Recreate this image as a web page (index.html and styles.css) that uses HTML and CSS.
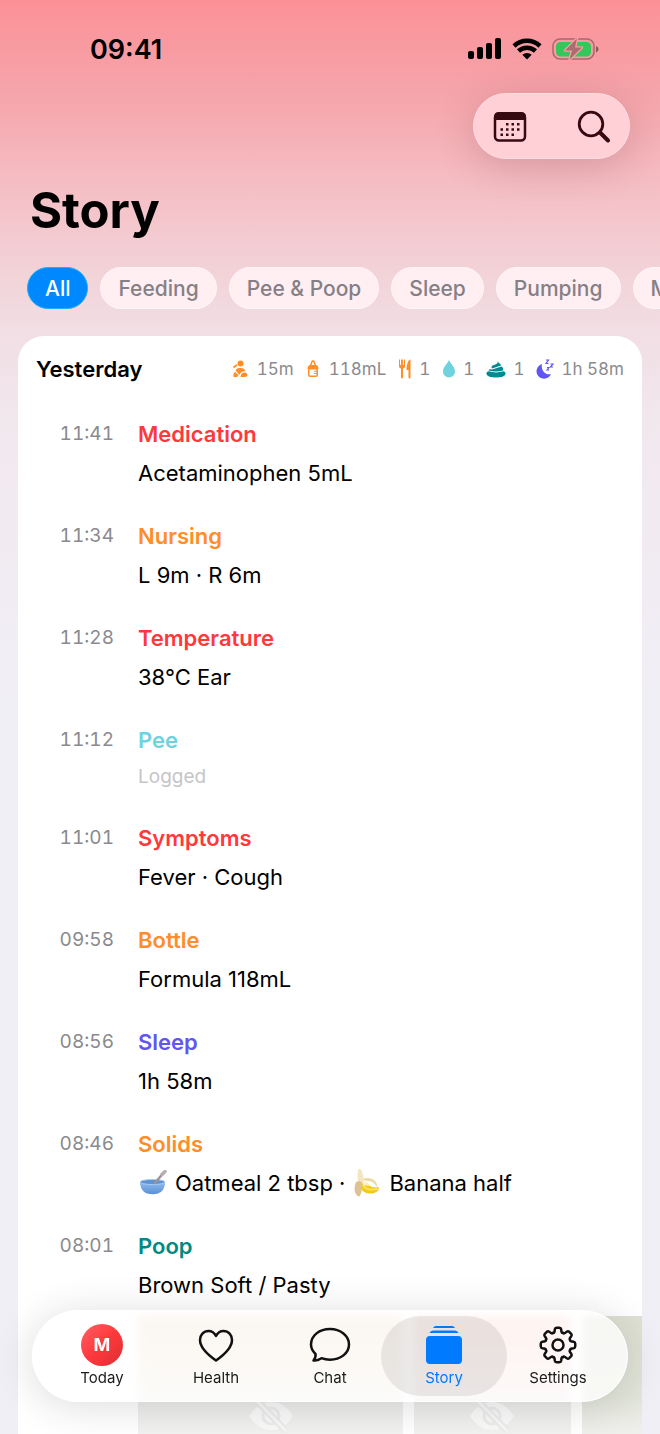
FILE: index.html
```html
<!DOCTYPE html>
<html lang="en">
<head>
    <meta charset="UTF-8">
    <meta name="viewport" content="width=device-width, initial-scale=1.0">
    <title>Story</title>
    <link rel="stylesheet" href="styles.css">
</head>
<body>
    <div class="status-bar">
        <time class="clock">09:41</time>
        <div class="status-icons">
            <svg width="34" height="22" viewBox="0 0 34 22">
                <rect x="0" y="13" width="6" height="8" rx="2"/>
                <rect x="9" y="9" width="6" height="12" rx="2"/>
                <rect x="18" y="5" width="6" height="16" rx="2"/>
                <rect x="27" y="0" width="6" height="21" rx="2"/>
            </svg>
            <svg width="30" height="22" viewBox="0 0 30 22">
                <g fill="none" stroke="#000" stroke-width="4.500">
                    <path d="M2 8a19 19 0 0 1 26 0"/>
                    <path d="M6.500 13a12.500 12.500 0 0 1 17 0"/>
                </g>
                <path d="M10.300 16.700a7 7 0 0 1 9.400 0L15 21.500z"/>
            </svg>
            <svg width="47" height="22" viewBox="0 0 47 22">
                <rect x="1" y="1" width="41" height="20" rx="7" fill="none" stroke="#a9686c" stroke-width="1.500"/>
                <path d="M44 8v6.500q2.500-.8 2.500-3.200T44 8z" fill="#8d585c"/>
                <rect x="4" y="4" width="35" height="14.500" rx="4.500" fill="#34c759"/>
                <path d="M25 .5 13 12.500h7L17.500 21.500 30 9.500h-7z" fill="#ac6c70" stroke="#f79da3" stroke-width="2.500" paint-order="stroke" stroke-linejoin="round"/>
            </svg>
        </div>
    </div>

    <header class="top">
        <div class="toolbar">
            <button aria-label="Calendar">
                <svg width="34" height="32" viewBox="0 0 34 32">
                    <rect x="2" y="2.500" width="30" height="27" rx="4" fill="none" stroke="#360810" stroke-width="2.500"/>
                    <path d="M1 9V6q0-5 5-5h22q5 0 5 5v3z" fill="#360810"/>
                    <g fill="#360810">
                        <path d="M13 12h2.500v2.500H13zM18.500 12H21v2.500h-2.500zM24 12h2.500v2.500H24z"/>
                        <path d="M7.500 17.200H10v2.500H7.500zM13 17.200h2.500v2.500H13zM18.500 17.200H21v2.500h-2.500zM24 17.200h2.500v2.500H24z"/>
                        <path d="M7.500 22.500H10V25H7.500zM13 22.500h2.500V25H13zM18.500 22.500H21V25h-2.500z"/>
                    </g>
                </svg>
            </button>
            <button aria-label="Search">
                <svg width="34" height="34" viewBox="0 0 34 34" fill="none" stroke="#360810" stroke-linecap="round">
                    <circle cx="14" cy="14" r="11.800" stroke-width="2.800"/>
                    <path d="M23 22.500 31 30.500" stroke-width="4"/>
                </svg>
            </button>
        </div>
        <h1>Story</h1>
    </header>

    <nav class="filters">
        <button class="chip selected">All</button>
        <button class="chip">Feeding</button>
        <button class="chip">Pee &amp; Poop</button>
        <button class="chip">Sleep</button>
        <button class="chip">Pumping</button>
        <button class="chip">Medication</button>
    </nav>

    <main class="day">
        <div class="day-header">
            <h2>Yesterday</h2>
            <ul class="totals">
                <li>
                    <svg class="wide" width="16" height="18" viewBox="0 0 16 18" fill="#ff8d28">
                        <circle cx="8.500" cy="3.500" r="3"/>
                        <path d="M2 7 4.500 5.200" stroke="#ff8d28" stroke-width="1.800" stroke-linecap="round"/>
                        <path d="M3.500 10.500C4.500 8.500 6 8 8.500 8c3 0 4.800 1.500 4.500 3.200-2.500-.2-5 1.500-5.500 3.800L3.500 10.500z"/>
                        <path d="M1.500 17q-.5-4 1.500-5l3.500 3q0 2-2 2z"/>
                        <path d="M8.500 17c0-2.500 1.800-4.700 4.500-4.500 2.300.3 2.800 2.500 1.800 3.800-.8.900-2.300.7-3.300.7z"/>
                    </svg>
                    15m
                </li>
                <li>
                    <svg class="wide" width="14" height="18" viewBox="0 0 14 18">
                        <path d="M4.500 5.500 6.300 1h1.400L9.500 5.500" fill="none" stroke="#ff8d28" stroke-width="1.500"/>
                        <path d="M1.500 9q0-4 3-4h5q3 0 3 4z" fill="#ff8d28"/>
                        <rect x="2.700" y="8.700" width="8.600" height="7.600" rx="1.500" fill="none" stroke="#ff8d28" stroke-width="1.500"/>
                        <path d="M8 11.200h3M8 13.500h3" stroke="#ff8d28"/>
                    </svg>
                    118mL
                </li>
                <li>
                    <svg width="14" height="20" viewBox="0 0 14 20" fill="#ff8d28">
                        <path d="M1 .5v7Q1 9 3 9.500V18q0 1.500 1 1.500T5 18V9.500Q7 9 7 7.500v-7"/>
                        <path d="M2.500 0v6M5.400 0v6" stroke="#fff"/>
                        <path d="M12.500.5C10 1 8.500 5.500 8.500 11h2v7.500q0 1 1 1t1-1z"/>
                    </svg>
                    1
                </li>
                <li>
                    <svg width="14" height="18" viewBox="0 0 14 18" fill="#6fd3df">
                        <path d="M7 0c-1.500 3.500-6 7-6 11.500a6 6 0 0 0 12 0C13 7 8.500 3.500 7 0z"/>
                    </svg>
                    1
                </li>
                <li>
                    <svg width="20" height="18" viewBox="0 0 20 18" fill="#008a91">
                        <path d="M12 1c.5 3 3 2.300 3 4.500L6 8.500C5 7 5.500 5.500 8 5c2-.3 4-1.500 4-4z"/>
                        <path d="M2.500 10.500Q3 8.500 6 9.500L15.500 6.500Q18 8 17 10.500q-7 2-14.500 0z"/>
                        <path d="M2.500 11.300q7.500 2.200 15 0Q20 12 19.500 14.200 18 17.500 10 17.500T.5 14.200Q0 12 2.500 11.300z"/>
                    </svg>
                    1
                </li>
                <li>
                    <svg width="18" height="20" viewBox="0 0 18 20" fill="#6155f5">
                        <path d="M6 5A7.500 7.500 0 1 0 15 15C9.500 16.500 4.500 11 6 5z"/>
                        <path d="M10 1h2.500L10 4.500h2.500M14.500 5H17l-2.500 3H17M11 8.500h2l-2 2.500h2" fill="none" stroke="#6155f5" stroke-width="1.200"/>
                    </svg>
                    1h 58m
                </li>
            </ul>
        </div>

        <ol class="entries">
            <li class="entry">
                <time>11:41</time>
                <div>
                    <h3 class="health">Medication</h3>
                    <p>Acetaminophen 5mL</p>
                </div>
            </li>
            <li class="entry">
                <time>11:34</time>
                <div>
                    <h3 class="feeding">Nursing</h3>
                    <p>L 9m · R 6m</p>
                </div>
            </li>
            <li class="entry">
                <time>11:28</time>
                <div>
                    <h3 class="health">Temperature</h3>
                    <p>38°C Ear</p>
                </div>
            </li>
            <li class="entry">
                <time>11:12</time>
                <div>
                    <h3 class="pee">Pee</h3>
                    <p class="logged">Logged</p>
                </div>
            </li>
            <li class="entry">
                <time>11:01</time>
                <div>
                    <h3 class="health">Symptoms</h3>
                    <p>Fever · Cough</p>
                </div>
            </li>
            <li class="entry">
                <time>09:58</time>
                <div>
                    <h3 class="feeding">Bottle</h3>
                    <p>Formula 118mL</p>
                </div>
            </li>
            <li class="entry">
                <time>08:56</time>
                <div>
                    <h3 class="sleep">Sleep</h3>
                    <p>1h 58m</p>
                </div>
            </li>
            <li class="entry">
                <time>08:46</time>
                <div>
                    <h3 class="feeding">Solids</h3>
                    <p class="foods">
                        <svg width="30" height="28" viewBox="0 0 30 28">
                            <defs>
                                <linearGradient id="bowl" x1="0" y1="0" x2="0" y2="1">
                                    <stop offset="0" stop-color="#8fbcf0"/>
                                    <stop offset="1" stop-color="#5a90d6"/>
                                </linearGradient>
                            </defs>
                            <path d="M2 13c0 7 4 10.500 7 11.500q6 1.500 11 0c4-1.500 7-5 7-11.500z" fill="url(#bowl)"/>
                            <ellipse cx="14.500" cy="13" rx="12.500" ry="2.500" fill="#5f92d0" stroke="#a9cdf5"/>
                            <path d="M17 14 24.500 5" stroke="#9c9397" stroke-width="2.500" stroke-linecap="round"/>
                            <path d="M24 5.500 27 2.500" stroke="#b7adb0" stroke-width="3.500" stroke-linecap="round"/>
                        </svg>
                        <span>Oatmeal 2 tbsp ·</span>
                        <svg width="30" height="28" viewBox="0 0 30 28">
                            <path d="M9 11C15 7 25 9 25.500 18c-2.500-2-4-6-9.500-6z" fill="#ecd9a8"/>
                            <path d="M8 14c4-2 7-1 9 2 2 2.500 6 2.500 9.500 2 1.500 3.500-3 7-9 6.500C11 24 7.500 20 8 14z" fill="#f4c81f"/>
                            <path d="M11 16c3 5 9 5.500 14.500 3.500" fill="none" stroke="#ffe45c" stroke-width="2"/>
                            <path d="M6 2Q6-.5 8 0t2 3q2 4 1.500 10L6 14Q5 8 6 2z" fill="#f4e5c3"/>
                            <path d="M4 13q5-2 6.500 1c-1 4 0 9-3 13.500C3 27 1 20 4 13z" fill="#dcc391"/>
                            <path d="M10 12.500c4 0 6 1.500 7.500 4.500L11 16z" fill="#fff1c7"/>
                        </svg>
                        <span>Banana half</span>
                    </p>
                </div>
            </li>
            <li class="entry">
                <time>08:01</time>
                <div>
                    <h3 class="poop">Poop</h3>
                    <p>Brown Soft / Pasty</p>
                    <div class="photos">
                        <div class="photo beige">
                            <svg width="46" height="34" viewBox="0 0 46 34">
                                <path d="M1 17Q10 3 23 3t22 14Q36 31 23 31T1 17z" fill="#fafafa"/>
                                <circle cx="23" cy="17" r="8" fill="none" stroke="#ededec" stroke-width="3"/>
                                <path d="M9 2 38 32" stroke="#ededec" stroke-width="7"/>
                                <path d="M9 2 38 32" stroke="#fafafa" stroke-width="2.500"/>
                            </svg>
                        </div>
                        <div class="photo pink">
                            <svg width="46" height="34" viewBox="0 0 46 34">
                                <path d="M1 17Q10 3 23 3t22 14Q36 31 23 31T1 17z" fill="#fafafa"/>
                                <circle cx="23" cy="17" r="8" fill="none" stroke="#ededec" stroke-width="3"/>
                                <path d="M9 2 38 32" stroke="#ededec" stroke-width="7"/>
                                <path d="M9 2 38 32" stroke="#fafafa" stroke-width="2.500"/>
                            </svg>
                        </div>
                        <div class="photo green"></div>
                    </div>
                </div>
            </li>
        </ol>
    </main>

    <nav class="tabs">
        <a href="#today">
            <span class="avatar">M</span>
            Today
        </a>
        <a href="#health">
            <svg width="42" height="42" viewBox="0 0 42 42" fill="none" stroke="#111" stroke-width="2.500">
                <path d="M21 36.500C11 29.500 5 23.500 5 16c0-5 3.500-9 8.500-9 3.500 0 6 2 7.500 5 1.500-3 4-5 7.500-5 5 0 8.500 4 8.500 9 0 7.500-6 13.500-16 20.500z" stroke-linejoin="round"/>
            </svg>
            Health
        </a>
        <a href="#chat">
            <svg width="42" height="42" viewBox="0 0 42 42" fill="none" stroke="#111" stroke-width="2.500">
                <path d="M21 5C10.500 5 2 11.500 2 20.500c0 4.500 2 7 4.500 9.500.5 2.500-.5 4.500-2 6.500 3 .3 5.500-.7 8-2.300 2.500 1 5.300 1.500 8.500 1.500 10.500 0 19-6.500 19-15.200S31.500 5 21 5z" stroke-linejoin="round"/>
            </svg>
            Chat
        </a>
        <a href="#story" class="active">
            <svg width="42" height="42" viewBox="0 0 42 42" fill="#007aff">
                <path d="M10 4q1-2 3-2h16q2 0 3 2zM6.500 9q1-2.500 3.500-2.500h22q2.500 0 3.500 2.500z"/>
                <rect x="3" y="12" width="36" height="28" rx="4"/>
            </svg>
            Story
        </a>
        <a href="#settings">
            <svg width="42" height="42" viewBox="0 0 42 42" fill="none" stroke="#111" stroke-width="2.500" stroke-linejoin="round">
                <path id="gear" d=""/>
                <circle cx="21" cy="21" r="5.500"/>
            </svg>
            Settings
        </a>
    </nav>

    <script>
        // outline of the settings gear: eight rounded teeth
        const teeth = 8;
        const step = Math.PI * 2 / teeth;
        const point = (radius, angle) =>
            (21 + radius * Math.sin(angle)).toFixed(2) + ' ' + (21 - radius * Math.cos(angle)).toFixed(2);
        let outline = '';
        for (let i = 0; i < teeth; i++) {
            const a = i * step;
            outline += (i ? 'L' : 'M') + point(16, a - 0.2);
            outline += 'Q' + point(17.3, a - 0.17) + ' ' + point(17.3, a - 0.08);
            outline += 'L' + point(17.3, a + 0.08);
            outline += 'Q' + point(17.3, a + 0.17) + ' ' + point(16, a + 0.2);
            outline += 'Q' + point(12, a + step / 2 - 0.1) + ' ' + point(13.2, a + step / 2);
            outline += 'Q' + point(12, a + step / 2 + 0.1) + ' ' + point(16, a + step - 0.2);
        }
        document.getElementById('gear').setAttribute('d', outline + 'Z');
    </script>
</body>
</html>
```
FILE: styles.css
```css
* {
    margin: 0;
    padding: 0;
    box-sizing: border-box;
}

body {
    height: 100vh;
    overflow: hidden;
    background: linear-gradient(#fb9197 0, #f5a6ac 100px, #f5bdc3 180px, #f2d0d5 260px, #f1dee4 330px, #f1e8ee 420px, #f1eff6 700px, #f0eff6 100%);
    font-family: Inter, "Liberation Sans", sans-serif;
    color: #000;
}

button {
    border: none;
    background: none;
    font: inherit;
    cursor: pointer;
}

ul, ol {
    list-style: none;
}

svg {
    display: block;
    flex: none;
}

.status-bar {
    display: flex;
    justify-content: space-between;
    align-items: center;
    height: 93px;
    padding: 5px 61px 0 90px;
}

.clock {
    font-size: 27px;
    font-weight: 600;
}

.status-icons {
    display: flex;
    align-items: center;
    gap: 10px;
}

.top {
    padding: 0 30px;
}

.toolbar {
    display: flex;
    justify-content: space-between;
    align-items: center;
    width: 157px;
    height: 66px;
    margin-left: auto;
    padding: 2px 18px 0 19px;
    border: 1px solid #ffdde1;
    border-radius: 33px;
    background: #ffd1d6;
    box-shadow: 0 8px 40px rgba(90, 30, 40, 0.2);
}

h1 {
    margin-top: 20px;
    font-size: 49px;
    font-weight: 700;
    line-height: 64px;
}

.filters {
    display: flex;
    gap: 12px;
    margin-top: 24px;
    padding-left: 27px;
    overflow: hidden;
}

.chip {
    flex: none;
    height: 42px;
    padding: 0 17px;
    border: 1px solid #fff5f7;
    border-radius: 21px;
    background: #ffeff3;
    color: #858085;
    font-size: 21px;
    font-weight: 500;
}

.chip.selected {
    border-color: #1eb0f5;
    background: #0088ff;
    color: #fff;
}

.day {
    margin: 27px 18px 0;
    overflow: hidden;
    border-radius: 26px;
    background: #fff;
}

.day-header {
    display: flex;
    justify-content: space-between;
    align-items: center;
    height: 66px;
    padding: 0 18px;
}

h2 {
    font-size: 22px;
    font-weight: 600;
}

.totals {
    display: flex;
    gap: 12px;
    color: #8a8a8e;
    font-size: 17px;
    font-variant-numeric: tabular-nums;
}

.totals li {
    display: flex;
    align-items: center;
    gap: 7px;
}

.totals .wide {
    margin-right: 2px;
}

.entries {
    display: flex;
    flex-direction: column;
    gap: 32px;
    padding-top: 16px;
}

.entry {
    display: grid;
    grid-template-columns: 96px 1fr;
    column-gap: 24px;
}

.entry time {
    color: #8a8a8e;
    font-size: 19px;
    font-variant-numeric: tabular-nums;
    line-height: 32px;
    text-align: right;
}

h3 {
    font-size: 22px;
    font-weight: 600;
    line-height: 32px;
}

.entry p {
    margin-top: 8px;
    font-size: 22px;
    line-height: 30px;
}

.entry .logged {
    color: #c5c5c7;
    font-size: 19px;
    line-height: 26px;
}

.foods {
    display: flex;
    align-items: center;
    gap: 7px;
}

.health {
    color: #ff383c;
}

.feeding {
    color: #ff8d28;
}

.pee {
    color: #6fd3df;
}

.sleep {
    color: #6155f5;
}

.poop {
    color: #008a83;
}

.photos {
    display: flex;
    gap: 11px;
    height: 200px;
    margin-top: 16px;
}

.photo {
    display: flex;
    justify-content: center;
    align-items: center;
    flex: 156 1 0;
}

.beige {
    flex-grow: 264;
    background: linear-gradient(#efdcc5 0, #f3ece0 70px, #ededec 86px, #f2f2f1 120px);
}

.pink {
    background: linear-gradient(#fbd0c6 0, #f7e3df 70px, #ededec 86px, #f2f2f1 120px);
}

.green {
    flex-grow: 60;
    background: linear-gradient(#dde0d2 0, #e2e5d9 80px, #f0f0ed 120px);
}

.tabs {
    position: fixed;
    right: 32px;
    bottom: 32px;
    left: 32px;
    display: flex;
    height: 92px;
    padding: 5px 12px;
    border: 1px solid #fff;
    border-radius: 46px;
    background: rgba(255, 255, 255, 0.75);
    box-shadow: 0 4px 40px rgba(0, 0, 0, 0.14);
    backdrop-filter: blur(4px);
}

.tabs a {
    display: flex;
    flex: 1;
    flex-direction: column;
    align-items: center;
    gap: 2px;
    margin: 0 -6px;
    padding-top: 8px;
    border-radius: 40px;
    color: #1c1c1c;
    font-size: 15px;
    line-height: 20px;
    text-decoration: none;
}

.tabs .active {
    background: rgba(60, 50, 50, 0.1);
    color: #007aff;
}

.avatar {
    display: flex;
    justify-content: center;
    align-items: center;
    width: 42px;
    height: 42px;
    border-radius: 50%;
    background: linear-gradient(135deg, #ff6266, #ff383c 50%, #d93034);
    color: #fff;
    font-size: 18px;
    font-weight: 700;
}
```
